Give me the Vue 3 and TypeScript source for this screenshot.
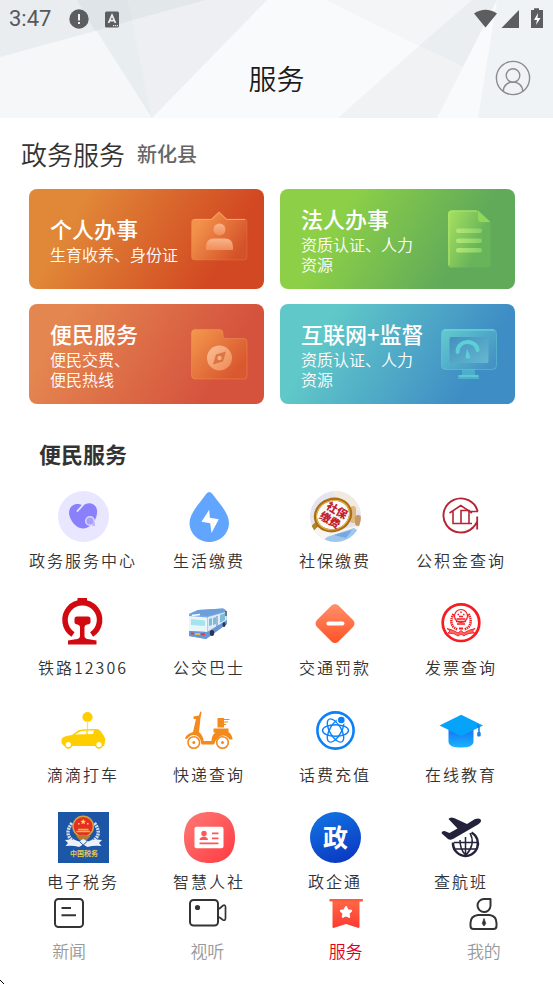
<script setup lang="ts">
interface Banner {
  id: string
  title: string
  text: string
}
interface Service {
  id: string
  name: string
}

const banners: Banner[] = [
  { id: 'person', title: '个人办事', text: '生育收养、身份证' },
  { id: 'legal', title: '法人办事', text: '资质认证、人力\n资源' },
  { id: 'civic', title: '便民服务', text: '便民交费、\n便民热线' },
  { id: 'monitor', title: '互联网+监督', text: '资质认证、人力\n资源' },
]

const services: Service[] = [
  { id: 'center', name: '政务服务中心' },
  { id: 'living', name: '生活缴费' },
  { id: 'social', name: '社保缴费' },
  { id: 'fund', name: '公积金查询' },
  { id: 'rail', name: '铁路12306' },
  { id: 'bus', name: '公交巴士' },
  { id: 'fine', name: '交通罚款' },
  { id: 'invoice', name: '发票查询' },
  { id: 'taxi', name: '滴滴打车' },
  { id: 'express', name: '快递查询' },
  { id: 'phone', name: '话费充值' },
  { id: 'edu', name: '在线教育' },
  { id: 'tax', name: '电子税务' },
  { id: 'hr', name: '智慧人社' },
  { id: 'gov', name: '政企通' },
  { id: 'flight', name: '查航班' },
]

const tabs: Service[] = [
  { id: 'news', name: '新闻' },
  { id: 'video', name: '视听' },
  { id: 'service', name: '服务' },
  { id: 'me', name: '我的' },
]
const activeTab = 'service'
</script>

<template>
  <div class="page">
    <header class="header">
      <svg class="header-bg" viewBox="0 0 553 118" preserveAspectRatio="none" aria-hidden="true">
        <rect width="553" height="118" fill="#f5f7f9" />
        <path d="M267 0H553V118H152Z" fill="#f9fafc" />
        <path d="M128 0H267L152 118Z" fill="#eeeff3" />
        <path d="M77 0H128L152 118Z" fill="#e8edf0" />
        <path d="M0 0H77L95 31L0 57Z" fill="#e9edf0" />
        <path d="M77 0H128L133 20L95 31Z" fill="#dee4e8" />
        <path d="M128 0H205L133 20Z" fill="#e2e7ea" />
        <path d="M326 0H472L419 46Z" fill="#f4f5f7" />
        <path d="M472 0H497L463 67L419 46Z" fill="#eaeef1" />
        <path d="M419 46L463 67L437 118H338Z" fill="#f1f2f4" />
        <path d="M497 0H553V118H478Z" fill="#eff3f6" />
      </svg>
      <div class="status">
        <span class="clock">3:47</span>
        <svg width="20" height="20" viewBox="0 0 20 20" aria-hidden="true">
          <circle cx="10" cy="10" r="9.700" fill="#5c5d5f" />
          <path d="M10 5v6.400M10 13v2" stroke="#eef1f3" stroke-width="2" />
        </svg>
        <svg class="ime" width="16" height="17" viewBox="0 0 16 17" aria-hidden="true">
          <rect x="1" y="0.500" width="14" height="16" rx="1.500" fill="#5c5d5f" />
          <path d="M4.500 12L8 4l3.500 8M5.800 9.600h4.400" fill="none" stroke="#eef1f3" stroke-width="1.700" />
          <path d="M9 14.600h5" stroke="#eef1f3" stroke-width="1.200" stroke-dasharray="1.200 .8" />
        </svg>
        <svg class="signals" width="72" height="22" viewBox="0 0 72 22" aria-hidden="true">
          <path d="M1 5.500Q12.500-2 24 5.500L12.500 19.500Z" fill="#5c5d5f" />
          <path d="M46 2V20H28.500Z" fill="#5c5d5f" />
          <path d="M59 2h2V.3h5V2h4v18H58V2Z" fill="#5c5d5f" />
          <path d="M65 5l-4 7h3l-1 5 4.500-7h-3Z" fill="#fff" />
        </svg>
      </div>
      <div class="titlebar">
        <h1>服务</h1>
        <button class="avatar" type="button" aria-label="个人中心">
          <svg width="36" height="36" viewBox="0 0 36 36" fill="none" stroke="#8c8c8c" stroke-width="1.400">
            <circle cx="18" cy="18" r="16.600" />
            <circle cx="18" cy="15.500" r="6.800" />
            <path d="M8.300 31.300C8.300 19 27.700 19 27.700 31.300" />
          </svg>
        </button>
      </div>
    </header>

    <main>
      <div class="heading">
        <h2>政务服务</h2>
        <button type="button" class="region">新化县</button>
      </div>

      <div class="banners">
        <a v-for="b in banners" :key="b.id" href="#" class="banner" :class="b.id">
          <span class="banner-text">
            <strong>{{ b.title }}</strong>
            <span>{{ b.text }}</span>
          </span>
          <svg v-if="b.id === 'person'" width="60" height="60" viewBox="0 0 60 60" aria-hidden="true">
            <defs>
              <linearGradient id="p1" x1="0" y1="0" x2="1" y2=".6"><stop offset=".2" stop-color="#f3924a" /><stop offset="1" stop-color="#d4522a" /></linearGradient>
              <linearGradient id="p2" x1="0" y1="0" x2="0" y2="1"><stop stop-color="#f9b48b" /><stop offset="1" stop-color="#f08d58" /></linearGradient>
            </defs>
            <path d="M7 10H23L31 2.500L39 10H56Q59 10 59 13V48Q59 51 56 51H7Q3.500 51 3.500 48V13Q3.500 10 7 10Z" fill="url(#p1)" stroke="#f79b55" stroke-opacity=".25" />
            <path d="M6 10.500H23.500L31 3.500L38.500 10.500H57" fill="none" stroke="#f6a35e" />
            <circle cx="31.500" cy="20.500" r="6" fill="url(#p2)" />
            <path d="M18 41V38Q18 29.500 26 29.500H37Q45 29.500 45 38V41Z" fill="url(#p2)" />
          </svg>
          <svg v-else-if="b.id === 'legal'" width="60" height="60" viewBox="0 0 60 60" aria-hidden="true">
            <defs>
              <linearGradient id="l1" x1="0" y1="0" x2="1" y2=".6"><stop stop-color="#a7e160" /><stop offset=".8" stop-color="#68b45a" /></linearGradient>
              <linearGradient id="l2"><stop stop-color="#b4e876" /><stop offset="1" stop-color="#86cf68" /></linearGradient>
            </defs>
            <path d="M12 1.500H39L51.500 13V55Q51.500 58.500 48 58.500H12Q9 58.500 9 55V5Q9 1.500 12 1.500Z" fill="url(#l1)" />
            <path d="M10 56V5Q10 2 13 2H38" fill="none" stroke="#aee66b" />
            <path d="M39 1.500L51.500 13H42Q39 13 39 10Z" fill="#8fd75d" />
            <rect x="17" y="19.500" width="26" height="4.500" rx="2.200" fill="url(#l2)" />
            <rect x="17" y="29.500" width="26" height="4.500" rx="2.200" fill="url(#l2)" />
            <rect x="17" y="39" width="26" height="4.500" rx="2.200" fill="url(#l2)" />
          </svg>
          <svg v-else-if="b.id === 'civic'" width="60" height="60" viewBox="0 0 60 60" aria-hidden="true">
            <defs>
              <linearGradient id="c1" x1="0" y1="0" x2="1" y2=".8"><stop stop-color="#f4984e" /><stop offset=".9" stop-color="#d9582f" /></linearGradient>
              <linearGradient id="c2" x1="0" y1="0" x2="1" y2="1"><stop stop-color="#fac09a" /><stop offset="1" stop-color="#ee8951" /></linearGradient>
            </defs>
            <path d="M7 5.500H31Q35 5.500 35 9V11Q35 14.500 38 14.500H56Q59 14.500 59 18V52Q59 55 56 55H7Q3.500 55 3.500 51V9Q3.500 5.500 7 5.500Z" fill="url(#c1)" stroke="#f7a764" stroke-opacity=".35" />
            <circle cx="31.500" cy="34" r="12.500" fill="url(#c2)" />
            <path d="M38 27.500L35 37.500L25 40.500L28 30.500Z" fill="#dc7541" />
            <circle cx="31.500" cy="34" r="2.200" fill="#f6ae83" />
          </svg>
          <svg v-else width="60" height="60" viewBox="0 0 60 60" aria-hidden="true">
            <defs>
              <linearGradient id="m1" x1="0" y1="0" x2="1" y2=".7"><stop stop-color="#62cbcf" /><stop offset="1" stop-color="#4593c4" /></linearGradient>
              <linearGradient id="m2" x1="0" y1="0" x2="1" y2="1"><stop stop-color="#438fbd" /><stop offset="1" stop-color="#65b9d1" /></linearGradient>
            </defs>
            <path d="M23 44H36V51H40V55H19V51H23Z" fill="#4bb0ca" />
            <path d="M20 52H39" stroke="#6acbd9" stroke-width="1.500" />
            <rect x="2.500" y="5.500" width="55" height="40" rx="4" fill="url(#m1)" stroke="#67d2d5" stroke-opacity=".45" />
            <path d="M5 6H55" stroke="#6bdcda" />
            <rect x="10.500" y="13" width="39" height="26" rx="2" fill="url(#m2)" />
            <path d="M18.500 28C18.500 15 37.500 15 38.500 26" fill="none" stroke="#5dcfd7" stroke-width="4" stroke-linecap="round" />
            <path d="M28 25L31.500 33Q30 36 26.500 34Z" fill="#5dcfd7" />
          </svg>
        </a>
      </div>

      <h3>便民服务</h3>

      <div class="grid">
        <a v-for="s in services" :key="s.id" href="#" class="service">
          <svg class="icon" viewBox="0 0 51 51" aria-hidden="true">
            <g v-if="s.id === 'center'">
              <circle cx="25.500" cy="25.500" r="25.500" fill="#e9e7ff" />
              <path d="M24.500 14.500C17 10 9 16 11.500 25C14 33.500 21 38 26 37.500C34 36.500 40 27 39 19C38 12 29 10 24.500 15.500Z" fill="#8b80fc" />
              <path d="M24.500 14.500L19.500 20" stroke="#e9e7ff" stroke-width="1.800" stroke-linecap="round" />
              <circle cx="32" cy="30" r="4.300" fill="#a89efc" stroke="#d9d4ff" stroke-width="1.600" />
              <path d="M34 34h3M36 31v4" stroke="#b3aafc" stroke-width="1.200" />
            </g>
            <g v-else-if="s.id === 'living'">
              <path d="M22.500 2.500Q25.300-.5 28 2.500C35 12 45 22 45 32A19.700 19 0 0 1 5.500 32C5.500 22 16 12 22.500 2.500Z" fill="#61a5ff" />
              <path d="M25.200 18.700L17.500 30.700L26.200 32.300L27.500 42L34.800 28.300L25.800 26.700Z" fill="#fff" />
            </g>
            <g v-else-if="s.id === 'social'">
              <clipPath id="sc"><circle cx="25.500" cy="25.500" r="25.500" /></clipPath>
              <g clip-path="url(#sc)">
                <rect width="51" height="51" fill="#e5e4ef" />
                <path d="M20 0H51V20L36 16Z" fill="#f2e9e0" />
                <path d="M0 36L28 39L51 34V51H0Z" fill="#f8f4f2" />
                <path d="M17 46L44 37L51 42V51H12Z" fill="#9fc6ed" />
                <path d="M24 44L42 39L36 47Z" fill="#77a9e0" />
                <rect x="40" y="15" width="6" height="17" rx="3" fill="#dfb87f" />
                <rect x="45" y="24" width="6" height="11" rx="3" fill="#c59866" />
                <path d="M8 32L1 39" stroke="#b58220" stroke-width="5" />
                <ellipse cx="23" cy="24" rx="17.800" ry="15.500" transform="rotate(-20 23 24)" fill="#fbfafa" stroke="#a96e16" stroke-width="3.200" />
                <ellipse cx="23" cy="24" rx="16.800" ry="14.500" transform="rotate(-20 23 24)" fill="none" stroke="#e3b849" stroke-width="1" />
                <g transform="rotate(31 23 24)" class="glyphs" fill="#c3202a" font-size="11" font-weight="900" text-anchor="middle">
                  <text x="24" y="22">社保</text>
                  <text x="23" y="34">缴费</text>
                </g>
              </g>
            </g>
            <g v-else-if="s.id === 'fund'" fill="none" stroke="#b52435">
              <path d="M41.600 20.500A17.300 17 0 1 0 37 36.500" stroke-width="1.900" />
              <path d="M33 20.500H42M25 32.500V19.500H33V32.500" stroke-width="1.600" />
              <path d="M13.500 22L24.800 14.500L36 22M17 20V32.500H36" stroke-width="1.600" />
              <path d="M41.200 25.500V38.500M41 31Q39 35 36 37.500" stroke-width="1.800" />
            </g>
            <g v-else-if="s.id === 'rail'" fill="#d10a12">
              <path d="M15 36.500A17.300 17.300 0 1 1 33.600 36.500" fill="none" stroke="#d10a12" stroke-width="5.600" />
              <path d="M19.500-.5H29V4H19.500Z" />
              <path d="M19 18.500H30Q32.500 18.500 32.500 21V24Q32.500 26 29 26.500Q26.500 27 26.500 29V38Q26.500 41 31 41.200L38.500 42.500V46.500H10V42.500L17.500 41.200Q22 41 22 38V29Q22 27 19.500 26.500Q16.500 26 16.500 24V21Q16.500 18.500 19 18.500Z" />
            </g>
            <g v-else-if="s.id === 'bus'">
              <path d="M5 16L14 12L39 10.500Q42 11 42.500 14V26L22 41L5 38Z" fill="#79abe1" />
              <path d="M5 16L14 12L39 10.500L42 13L24 18Z" fill="#6b9edb" />
              <path d="M5 18L23.500 19.500V34L5 33Z" fill="#e8f6fa" />
              <path d="M7 21L21 22.500V28L7 27Z" fill="#a5e4ef" />
              <path d="M24 19L42 14V26L24 36Z" fill="#dcecf7" />
              <path d="M25 21L28 20V27L25 28ZM29 20L32 19V26L29 27ZM36 17L41 15V22L36 25Z" fill="#7ebbd6" />
              <path d="M33 18V33" stroke="#6a80a8" />
              <path d="M5 33L23 34L43 22V26L22 41L5 38Z" fill="#6b95d6" />
              <path d="M7 34.500H10V36.500H7ZM17 35H21V37.500H17Z" fill="#e44249" />
              <path d="M11 35H16V37H11Z" fill="#e6b942" />
              <ellipse cx="28" cy="35" rx="2.200" ry="3" fill="#2c3448" />
              <ellipse cx="40" cy="26.500" rx="1.500" ry="2.500" fill="#2c3448" />
              <path d="M42 13V18" stroke="#2c3448" stroke-width="1.200" />
              <path d="M8 17.500L16 16.500" stroke="#fff" stroke-width="1.500" />
            </g>
            <g v-else-if="s.id === 'fine'">
              <defs><linearGradient id="fg" x1="0" y1="0" x2="0" y2="1"><stop stop-color="#ff906b" /><stop offset="1" stop-color="#ff5226" /></linearGradient></defs>
              <path d="M21.500 7.500Q25 4.500 28.500 7.500L43 22Q46 25.500 43 29L28.500 43.500Q25 46.500 21.500 43.500L7 29Q4 25.500 7 22Z" fill="url(#fg)" />
              <path d="M18.300 25.500H32.500" stroke="#fff" stroke-width="3.800" stroke-linecap="round" />
            </g>
            <g v-else-if="s.id === 'invoice'" fill="none" stroke="#f41d22">
              <circle cx="25" cy="24.700" r="18.300" stroke-width="2.700" />
              <circle cx="25" cy="18" r="6.500" stroke-width="1.200" />
              <path d="M20.500 21H29.500M20 23.500H30M21 26H29" stroke-width="1.300" />
              <path d="M25 13.500V15M21.500 16.500H23M27 16.500H28.500M23 18.500H27" stroke-width="1.500" />
              <path d="M17.500 16Q11.500 28 22 31.500M32.500 16Q38.500 28 28 31.500" stroke-width="2.600" stroke-dasharray="1.400 .7" />
              <path d="M11 30.500Q18 32 22 35L25 32.500L28 35Q32 32 39 30.500L36.500 33L38.500 35Q31 35 28 38L25 36L22 38Q19 35 12 35L14 33Z" fill="#f66" stroke-width=".9" />
              <path d="M23 30.500H27" stroke-width="2" />
            </g>
            <g v-else-if="s.id === 'taxi'">
              <circle cx="29.500" cy="12" r="5.100" fill="#ffce00" />
              <path d="M29.500 16V25" stroke="#ffdf66" stroke-width="1.200" />
              <path d="M3.500 34Q5 31 14 30L20 25.500Q22 24.500 27 24.300L38 24Q41 24 42.500 26L46 31Q48 34 47 37L46 41H6L3.500 38Z" fill="#ffce00" />
              <path d="M17 29.500L22.500 26.200Q27 25.300 36 25.500L35 29Z" fill="#fff" />
              <path d="M29 25.500V32.500L31 32" fill="none" stroke="#ffce00" stroke-width="1.200" />
              <circle cx="10.300" cy="39.500" r="3.400" fill="#fff" stroke="#ffce00" stroke-width="1.600" />
              <circle cx="41" cy="39.500" r="3.400" fill="#fff" stroke="#ffce00" stroke-width="1.600" />
            </g>
            <g v-else-if="s.id === 'express'" fill="#f28a1e">
              <path d="M9.500 11.500L15 10.500L16.200 6.500L17.600 7L16.500 13L15 27Q19.500 31 19.500 36H27.500Q27.500 30 31.500 27.500H29.500V23.500H44.500V27Q48.500 30 48.500 34.500H45.500Q39 26 31.500 36L30 39.500H17.500Q16.500 32 12.500 30.500Q7 28.500 3 34L1 33.500Q2 29 9 27L12 14H9.500Z" />
              <circle cx="9.800" cy="37.500" r="5.800" fill="#fff" stroke="#f28a1e" stroke-width="1.600" />
              <circle cx="38.500" cy="37.500" r="5.800" fill="#fff" stroke="#f28a1e" stroke-width="1.600" />
              <circle cx="9.800" cy="37.500" r="1.500" /><circle cx="38.500" cy="37.500" r="1.500" />
              <path d="M33.500 13H40V22.500H33.500Z" />
              <path d="M38.500 14.500H45.500M38.500 17H44M38.500 19.500H42" stroke="#f28a1e" stroke-width="1.200" />
            </g>
            <g v-else-if="s.id === 'phone'" fill="none" stroke="#0a80fb" stroke-width="1.400">
              <circle cx="25.500" cy="25.500" r="18.100" stroke-width="2.600" />
              <ellipse cx="25.500" cy="25.500" rx="13" ry="5.800" />
              <ellipse cx="25.500" cy="25.500" rx="13" ry="5.800" transform="rotate(60 25.500 25.500)" />
              <ellipse cx="25.500" cy="25.500" rx="13" ry="5.800" transform="rotate(120 25.500 25.500)" />
              <circle cx="31.300" cy="15" r="4" fill="#0a80fb" stroke="#fff" />
            </g>
            <g v-else-if="s.id === 'edu'">
              <defs><linearGradient id="eg" x1="0" y1="0" x2="0" y2="1"><stop offset=".3" stop-color="#1682f5" /><stop offset="1" stop-color="#18b4ff" /></linearGradient></defs>
              <path d="M12.500 22H37.500V37Q37.500 42.500 25 42.500T12.500 37Z" fill="url(#eg)" />
              <path d="M3.500 20.400L25.200 9.700L47 20.400L25.200 31Z" fill="#06a3fb" />
              <path d="M41.500 20L43 22.500V29" fill="none" stroke="#1479dd" stroke-width="1.500" />
              <rect x="41.200" y="27" width="3.500" height="4.500" rx="1" fill="#187fe5" />
            </g>
            <g v-else-if="s.id === 'tax'">
              <rect width="51" height="51" fill="#1b56a7" />
              <path d="M14 11Q4 24 19 31M36.500 11Q46 24 31.500 31" fill="none" stroke="#d5dded" stroke-width="3.400" stroke-dasharray="2 .8" />
              <circle cx="25.200" cy="14.500" r="10.200" fill="#e62e24" stroke="#d6a340" stroke-width="1.500" />
              <path d="M18.500 19.500H32M20 17.500H30.500" stroke="#eabc3d" stroke-width="1.500" />
              <path d="M25.200 7l.8 1.800 1.900.2-1.400 1.300.4 1.900-1.700-1-1.700 1 .4-1.900-1.400-1.300 1.900-.2ZM20 11h1.500v1.500H20ZM29 11h1.500v1.500H29Z" fill="#ffe04a" />
              <path d="M18 24L25 22.500L32.500 24L29 28H21.500Z" fill="#b77b34" />
              <path d="M7 28Q15 26.500 21 29.500L25.200 27L30 29.500Q36 26.500 44 28L41 31L43.500 34Q36 33 29.500 35L25.200 32.500L21 35Q15 33 7.500 34L10 31Z" fill="#edf2f8" />
              <path d="M21.500 29.500L25.200 33L29 29.500" fill="none" stroke="#1b56a7" />
              <text class="glyphs" x="26" y="44" fill="#e5c94f" font-size="7" font-weight="700" text-anchor="middle">中国税务</text>
            </g>
            <g v-else-if="s.id === 'hr'">
              <defs><linearGradient id="hg" x1="0" y1="0" x2="1" y2="1"><stop stop-color="#ff7a75" /><stop offset="1" stop-color="#fe3a42" /></linearGradient></defs>
              <path d="M25.500 0C41 0 51 8 51 25.500S41 51 25.500 51 0 43 0 25.500 10 0 25.500 0Z" fill="url(#hg)" />
              <rect x="10.500" y="14.700" width="29" height="21.500" rx="2" fill="#fff" />
              <circle cx="20" cy="21.500" r="2.700" fill="#ff5558" />
              <path d="M15.500 28Q15.500 25 20 24.500Q24 25 24 28ZM28 20.500H34.500V22.200H28ZM28 25.500H34.500V27.200H28ZM15.500 30.500H34.500V32.200H15.500Z" fill="#ff5558" />
            </g>
            <g v-else-if="s.id === 'gov'">
              <defs><linearGradient id="gg" x1=".3" y1="0" x2=".7" y2="1"><stop stop-color="#1272e2" /><stop offset="1" stop-color="#0a38c1" /></linearGradient></defs>
              <circle cx="25.500" cy="25.500" r="25.500" fill="url(#gg)" />
              <text class="glyphs" x="25.500" y="34.500" fill="#fff" font-size="25" font-weight="700" text-anchor="middle">政</text>
            </g>
            <g v-else fill="#23223a">
              <g fill="none" stroke="#23223a">
                <path d="M35.500 20.500A12.500 12.500 0 1 1 17 30.500" stroke-width="2.400" />
                <path d="M24 28Q24 37 29 42.500M29.500 25V43M34 21Q40 32 30 43M18 30.500H42M19.500 37H40" stroke-width="1.500" />
              </g>
              <path d="M12.500 7Q14 4.500 18 6L31 12L39 7Q44 5.500 45 8Q45.500 10 42 12.500L17 27Q14 28.500 12 27L5.800 21.500Q5 19 8.500 19L13.500 21L21.500 16.500Z" />
            </g>
          </svg>
          <span>{{ s.name }}</span>
        </a>
      </div>
    </main>

    <nav class="tabs">
      <a v-for="t in tabs" :key="t.id" href="#" class="tab" :class="{ active: t.id === activeTab }">
        <svg width="40" height="34" viewBox="0 0 40 34" fill="none" stroke="#343434" stroke-width="2" aria-hidden="true">
          <g v-if="t.id === 'news'">
            <rect x="6" y="3" width="28" height="28" rx="3.500" />
            <path d="M12.500 12H22M12.500 19.300H27" />
          </g>
          <g v-else-if="t.id === 'video'">
            <rect x="3" y="4" width="28" height="25.500" rx="3.500" />
            <circle cx="10.500" cy="11.500" r="2.600" fill="#343434" stroke="none" />
            <path d="M32 13L36 9.500Q38.500 8.500 38.500 11V22Q38.500 25 36 24L32 21" stroke-width="1.700" />
          </g>
          <g v-else-if="t.id === 'service'" stroke="none">
            <defs><linearGradient id="tg" x1="0" y1="0" x2="0" y2="1"><stop stop-color="#ff6845" /><stop offset="1" stop-color="#fd3a31" /></linearGradient></defs>
            <path d="M6.500 5H33.500V31Q33 32.500 31 31.500L20 28L9 31.500Q7 32.500 6.500 31Z" fill="url(#tg)" />
            <rect x="3.300" y="3" width="33.700" height="2.500" rx="1" fill="#ff5a3d" />
            <path d="M20 11l1.600 3.300 3.500.5-2.500 2.600.6 3.500-3.200-1.700-3.200 1.700.6-3.500-2.500-2.600 3.500-.5Z" fill="#fff" stroke="#fff" stroke-linejoin="round" />
          </g>
          <g v-else>
            <path d="M20 3H26.500V10A6.500 6.500 0 1 1 20 3Z" stroke-linejoin="round" />
            <path d="M14 19H25.500Q32.500 20 32.500 27V30Q32.500 33 29.500 33H9.500Q6.500 33 6.500 30V27Q6.500 20 14 19Z" />
            <path d="M20 22.500l1.700 5-1.700 2.500-1.700-2.500Z" fill="#343434" stroke="#343434" stroke-width=".8" />
          </g>
        </svg>
        <span>{{ t.name }}</span>
      </a>
      <svg class="corner" width="4" height="4" viewBox="0 0 4 4" aria-hidden="true"><path d="M0 0h1v1H0zM1 1h1v1H1zM2 2h1v1H2zM3 3h1v1H3z" fill="#000" /></svg>
    </nav>
  </div>
</template>

<style>
body {
  background: #fff;
}
</style>

<style scoped>
.page {
  min-height: 100vh;
  display: flex;
  flex-direction: column;
  font-family: 'Noto Sans CJK SC', sans-serif;
  color: #333;
}
main {
  flex: 1;
}
h1,
h2,
h3 {
  margin: 0;
}
a {
  color: inherit;
  text-decoration: none;
}
button {
  border: 0;
  padding: 0;
  background: none;
  font-family: inherit;
  cursor: pointer;
}
.header {
  position: relative;
}
.header-bg {
  position: absolute;
  inset: 0;
  width: 100%;
  height: 100%;
  z-index: -1;
}
.status {
  height: 38px;
  display: flex;
  align-items: center;
  padding: 0 8px 0 9px;
}
.clock {
  font: 400 22px/38px Roboto, sans-serif;
  color: #57585a;
  margin-right: 18px;
}
.ime {
  margin-left: 15px;
}
.signals {
  margin-left: auto;
}
.titlebar {
  height: 80px;
  display: grid;
  grid-template-columns: 1fr auto 1fr;
  align-items: center;
  padding: 0 22px;
}
h1 {
  grid-column: 2;
  font-size: 28px;
  line-height: 40px;
  font-weight: 350;
  color: #1c1c1c;
}
.avatar {
  justify-self: end;
  height: 36px;
}
.heading {
  display: flex;
  align-items: center;
  gap: 12px;
  padding: 17px 21px 16px;
}
h2 {
  font-size: 26px;
  line-height: 38px;
  font-weight: 350;
}
.region {
  font-size: 20px;
  line-height: 38px;
  font-weight: 500;
  color: #666;
}
.banners {
  display: grid;
  grid-template-columns: 1fr 1fr;
  gap: 15px 16px;
  padding: 0 38px 0 29px;
}
.banner {
  height: 100px;
  display: flex;
  align-items: center;
  justify-content: space-between;
  box-sizing: border-box;
  padding: 0 16px 0 21px;
  border-radius: 8px;
  color: #fff;
}
.banner svg {
  flex: none;
}
.banner-text {
  display: flex;
  flex-direction: column;
  padding-bottom: 3px;
  font-size: 16px;
  line-height: 20px;
  font-weight: 350;
  white-space: pre;
}
.banner-text strong {
  font-size: 22px;
  line-height: 32px;
  font-weight: 500;
}
.person {
  background: linear-gradient(120deg, #e18838 20%, #d24822 80%);
}
.legal {
  background: linear-gradient(120deg, #8dd047 25%, #60aa5a 75%);
}
.civic {
  background: linear-gradient(120deg, #e48650 15%, #d5523d 80%);
}
.monitor {
  background: linear-gradient(120deg, #60c8c8 20%, #3f8dc5 80%);
}
h3 {
  padding: 33px 39px 22px;
  font-size: 22px;
  line-height: 32px;
  font-weight: 700;
}
.grid {
  display: grid;
  grid-template-columns: repeat(4, 1fr);
  row-gap: 26px;
  padding: 0 29px 0 20px;
}
.service {
  display: flex;
  flex-direction: column;
  align-items: center;
  gap: 6px;
  font-size: 16px;
  line-height: 24px;
  font-weight: 350;
  letter-spacing: 2px;
  white-space: nowrap;
}
.icon {
  width: 51px;
  height: 51px;
}
.glyphs {
  font-family: 'Noto Sans CJK SC', sans-serif;
  letter-spacing: 0;
}
.tabs {
  position: sticky;
  bottom: 0;
  display: grid;
  grid-template-columns: repeat(4, 1fr);
  background: #fff;
  padding: 2px 0 21px;
}
.tab {
  display: flex;
  flex-direction: column;
  align-items: center;
  gap: 9px;
  font-size: 17px;
  line-height: 24px;
  font-weight: 350;
  color: #999;
}
.active {
  color: #e1001b;
}
.corner {
  position: absolute;
  left: 0;
  bottom: 0;
}
</style>
